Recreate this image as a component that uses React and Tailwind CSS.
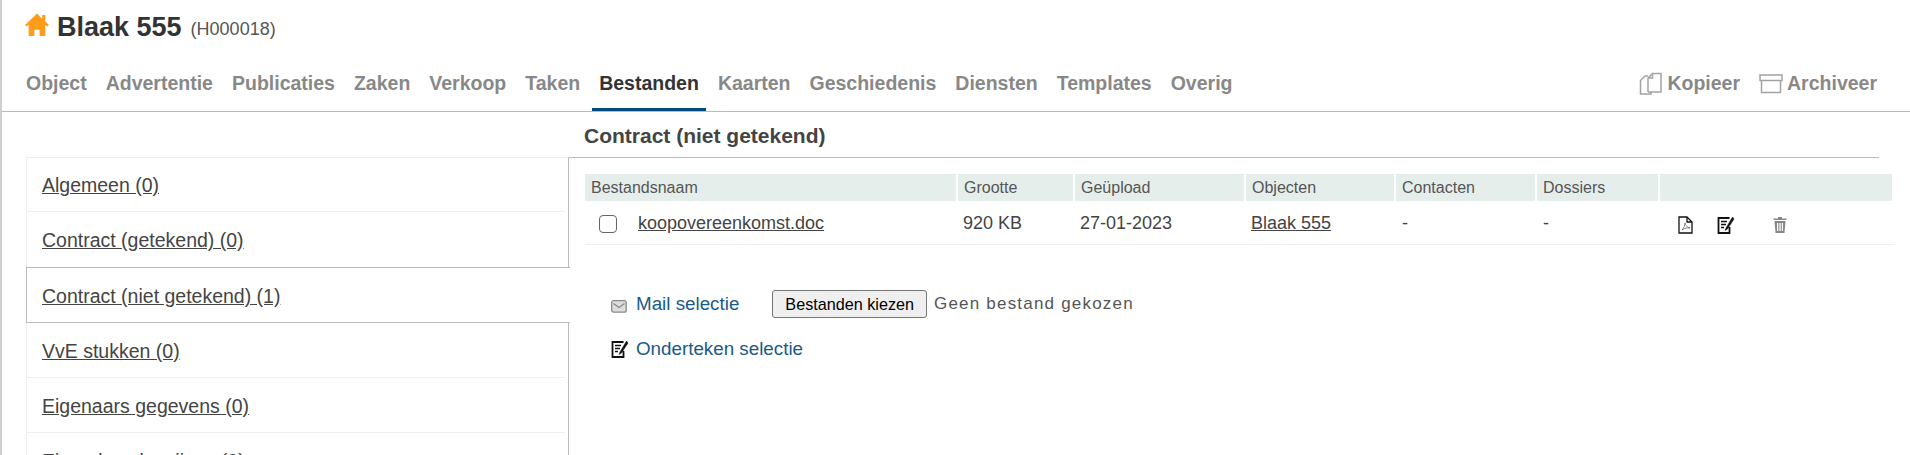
// Object detail page, tab "Bestanden"
const tabs = ['Object', 'Advertentie', 'Publicaties', 'Zaken', 'Verkoop', 'Taken', 'Bestanden', 'Kaarten', 'Geschiedenis', 'Diensten', 'Templates', 'Overig'];
const folders = [
  { label: 'Algemeen (0)', divider: true },
  { label: 'Contract (getekend) (0)' },
  { label: 'Contract (niet getekend) (1)', active: true },
  { label: 'VvE stukken (0)', divider: true },
  { label: 'Eigenaars gegevens (0)', divider: true },
  { label: 'Eigendomsbewijzen (0)' },
];
const columns = ['Bestandsnaam', 'Grootte', 'Geüpload', 'Objecten', 'Contacten', 'Dossiers', ''];
const gridCols = 'grid grid-cols-[373px_117px_171px_150px_141px_123px_1fr]';

function HomeIcon() {
  return (
    <svg width="26" height="26" viewBox="0 0 25 25" className="-mt-[5px] text-[#ff9c1a]" fill="currentColor">
      <path d="M12.500 1.500 1 12.500l1.500 1.500 2-1.800V23H10v-6h5v6h5.500V12.200l2 1.800 1.500-1.500-3.500-3.300V3h-3v3.500z" />
    </svg>
  );
}

function CopyIcon() {
  return (
    <svg width="24" height="24" viewBox="0 0 24 24" fill="none" stroke="#a3a3a3" strokeWidth="1.500">
      <path d="M9 20V6l4.500-4.500H22V20H9" />
      <path d="M13.500 1.500V6H9" />
      <path d="M9 4H6L1.500 8.500v13.500H12v-2" />
    </svg>
  );
}

function ArchiveIcon() {
  return (
    <svg width="24" height="20" viewBox="0 0 24 20" fill="none" stroke="#a3a3a3" strokeWidth="1.500">
      <rect x="1" y="1" width="22" height="5.500" />
      <path d="M2.500 6.500V18.500h19V6.500" />
    </svg>
  );
}

function PdfIcon() {
  return (
    <svg width="15" height="18" viewBox="0 0 15 18" fill="none" stroke="#111" strokeWidth="1.300">
      <path d="M1 1h8l5 5v11H1z" />
      <path d="M9 1v5h5" />
      <path d="M4 14c2-2 3-5 3-7 0 2 2 4 5 5-3-.5-5 0-8 2z" strokeWidth=".7" stroke="#555" />
    </svg>
  );
}

function SignIcon({ size = 18 }) {
  return (
    <svg width={size} height={size} viewBox="0 0 18 18" fill="none" stroke="#111">
      <path d="M12.500 2H1.500v15h11v-6" strokeWidth="1.800" />
      <path d="M4 5.500h6M4 8.500h5M4 11.500h3" strokeWidth="1.300" />
      <path d="M15.500 1 9 12l-1 2.500 2.500-1.500L17 3z" fill="#111" strokeWidth=".5" />
    </svg>
  );
}

function TrashIcon() {
  return (
    <svg width="14" height="16" viewBox="0 0 14 16" fill="#888">
      <path d="M5 0h4v1.500h4.500V3H.5V1.500H5z" />
      <path d="M1.500 4h11l-1 12h-9zM4 6v8h1.300V6zm2.400 0v8h1.300V6zM8.800 6v8h1.200V6z" fillRule="evenodd" />
    </svg>
  );
}

function MailIcon() {
  return (
    <svg width="16" height="13" viewBox="0 0 16 13" fill="#ddd" stroke="#8a8a8a" strokeWidth="1.300">
      <rect x=".7" y=".7" width="14.500" height="11.500" rx="2" />
      <path d="M2.500 3.500 8 7.500l5.500-4" fill="none" />
    </svg>
  );
}

export default function App() {
  return (
    <div className="h-[455px] overflow-hidden border-l-2 border-[#cfcfcf] bg-white font-['Liberation_Sans',Arial,sans-serif] text-[#444]">
      <div className="flex h-[54px] items-center gap-[7px] pl-[22px]">
        <HomeIcon />
        <h1 className="text-[27px] font-bold leading-none text-[#333]">Blaak 555</h1>
        <span className="mt-[4px] ml-[2px] text-[18px] text-[#555]">(H000018)</span>
      </div>

      <div className="flex h-[58px] items-stretch justify-between border-b border-[#bbb] pr-[33px] pl-[17px]">
        <nav className="flex gap-[5px]">
          {tabs.map((tab) => (
            <a
              key={tab}
              className={`flex items-center border-b-[3px] px-[7px] pt-[5px] text-[19.5px] font-bold ${tab === 'Bestanden' ? 'border-[#004a7c] text-[#333]' : 'border-transparent text-[#888]'}`}
            >
              {tab}
            </a>
          ))}
        </nav>
        <div className="flex items-center gap-[19px] pt-[2px] text-[19.5px] font-bold text-[#888]">
          <span className="flex items-center gap-[4px]"><CopyIcon />Kopieer</span>
          <span className="flex items-center gap-[4px]"><ArchiveIcon />Archiveer</span>
        </div>
      </div>

      <div className="flex">
        <aside className="mt-[45px] ml-[24px] w-[543px] shrink-0 text-[19.5px]">
          {folders.map((folder, i) => (
            <div
              key={folder.label}
              className={folder.active
                ? 'relative z-10 -mr-[1px] flex h-[56px] items-center border border-r-0 border-[#bbb] bg-white pt-[3px] pl-[15px]'
                : `h-[55px] border-r border-l border-[#bbb] border-l-[#eee] ${i === 0 ? 'border-t border-t-[#eee]' : ''}`}
            >
              {folder.active ? (
                <a className="underline">{folder.label}</a>
              ) : (
                <div className={`mr-[3px] flex h-full items-center pt-[3px] pl-[15px] ${folder.divider ? 'border-b border-[#eee]' : ''}`}>
                  <a className="underline">{folder.label}</a>
                </div>
              )}
            </div>
          ))}
        </aside>

        <main className="min-w-0 flex-1">
          <h2 className="flex h-[45px] items-center pt-[2px] pl-[15px] text-[21px] font-bold text-[#444]">Contract (niet getekend)</h2>
          <div className="mr-[31px] h-px bg-[#bbb]" />

          <div className="mx-[16px] mt-[16px] text-[18px]">
            <div className={`${gridCols} h-[27px] text-[16px]`}>
              {columns.map((col) => (
                <div key={col} className="mr-[2px] flex items-center bg-[#e6eeec] pt-[1px] pl-[6px] text-[#555]">{col}</div>
              ))}
            </div>
            <div className={`${gridCols} h-[44px] items-center border-b border-[#eee] pt-[2px]`}>
              <div className="flex items-center">
                <span className="ml-[14px] h-[18px] w-[18px] rounded-[4px] border border-[#666] bg-white" />
                <a className="ml-[21px] underline">koopovereenkomst.doc</a>
              </div>
              <div className="pl-[5px]">920 KB</div>
              <div className="pl-[5px]">27-01-2023</div>
              <div className="pl-[5px]"><a className="underline">Blaak 555</a></div>
              <div className="pl-[6px]">-</div>
              <div className="pl-[6px]">-</div>
              <div className="flex items-center pt-[3px] pl-[18px]">
                <PdfIcon />
                <span className="ml-[24px]"><SignIcon /></span>
                <span className="ml-[38px]"><TrashIcon /></span>
              </div>
            </div>

            <div className="mt-[45px] ml-[26px] flex items-center">
              <span className="mt-[5px] w-[25px]"><MailIcon /></span>
              <a className="text-[18.8px] text-[#1a5a8a]">Mail selectie</a>
              <button className="ml-[33px] h-[28px] rounded-[3px] border border-[#767676] bg-[#efefef] px-[12px] text-[16.2px] text-black">Bestanden kiezen</button>
              <span className="ml-[7px] text-[17px] tracking-[1.2px] text-[#555]">Geen bestand gekozen</span>
            </div>
            <div className="mt-[17px] ml-[26px] flex items-center">
              <span className="w-[25px]"><SignIcon size={18} /></span>
              <a className="text-[18.8px] text-[#1a5a8a]">Onderteken selectie</a>
            </div>
          </div>
        </main>
      </div>
    </div>
  );
}
